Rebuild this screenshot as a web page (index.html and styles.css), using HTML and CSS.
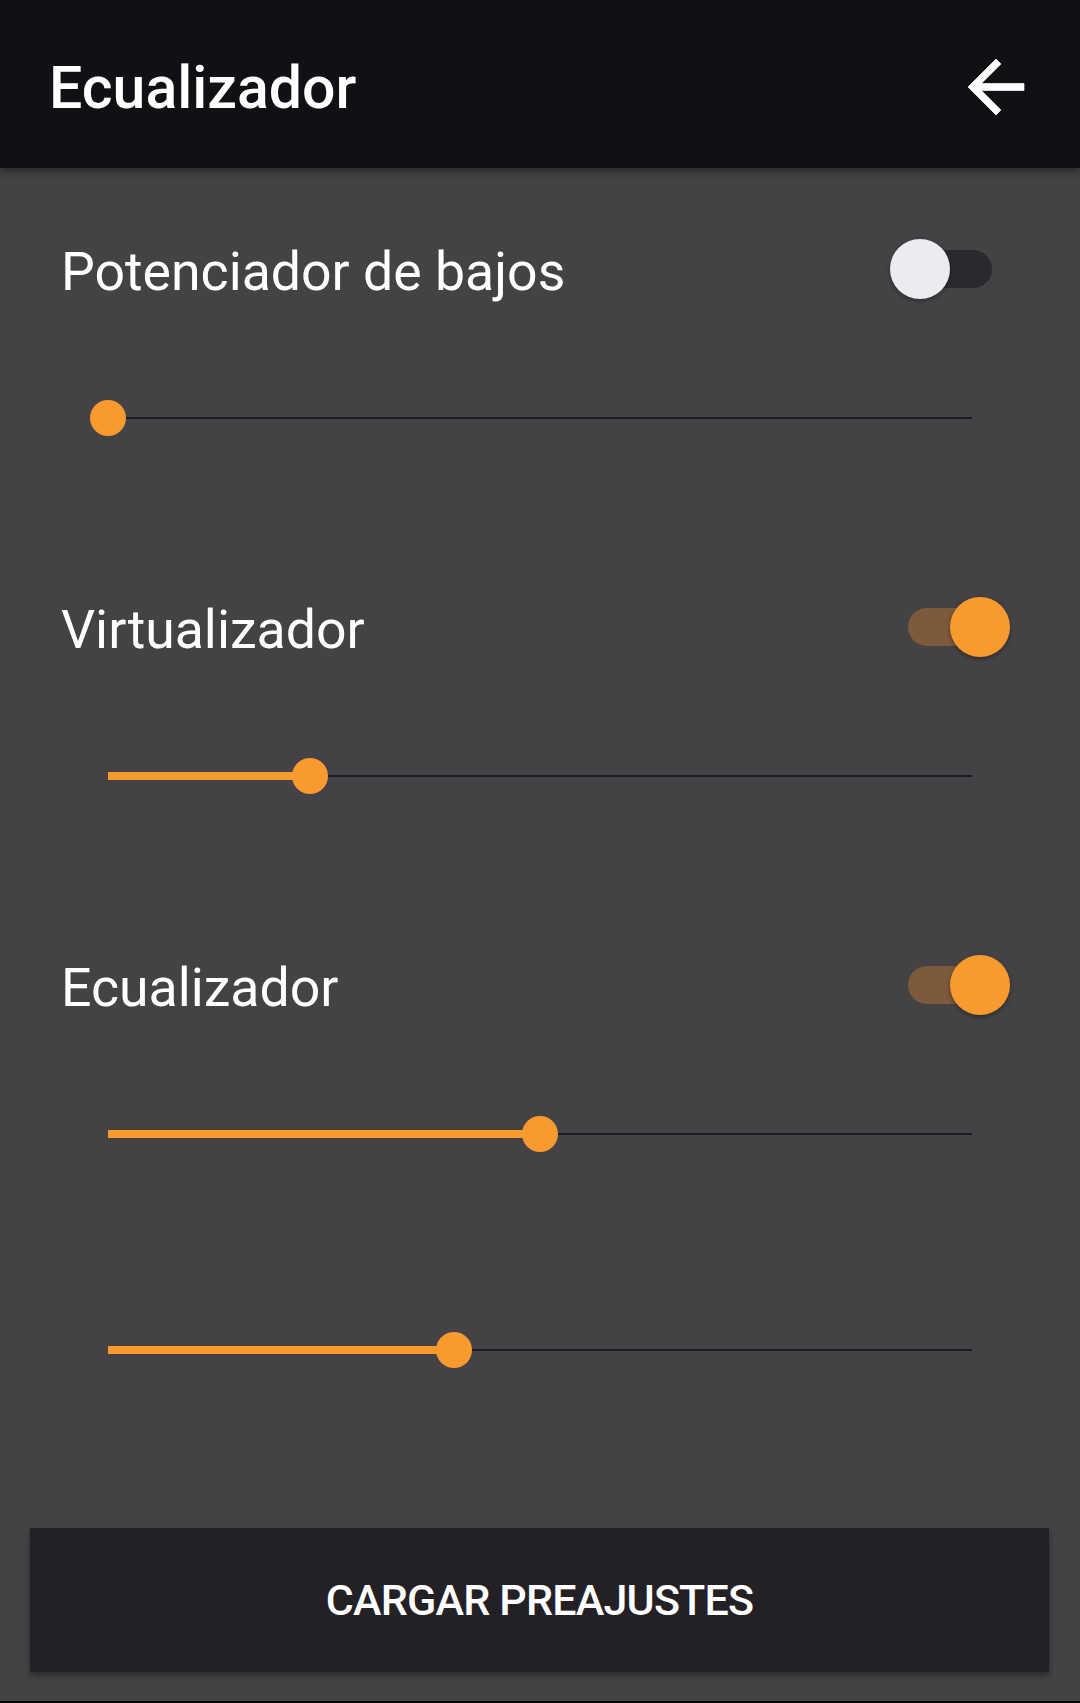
FILE: index.html
```html
<!DOCTYPE html>
<html lang="es">
<head>
<meta charset="utf-8">
<title>Ecualizador</title>
<link rel="stylesheet" href="styles.css">
</head>
<body>
<div class="app">
  <header class="topbar">
    <h1 class="title">Ecualizador</h1>
    <svg class="back" viewBox="0 0 24 24" aria-hidden="true"><path d="M20 11H7.83l5.59-5.59L12 4l-8 8 8 8 1.41-1.41L7.83 13H20v-2z"/></svg>
  </header>
  <main class="content">
    <section class="section first">
      <div class="row">
        <span class="label">Potenciador de bajos</span>
        <div class="switch"><div class="track"></div><div class="thumb"></div></div>
      </div>
      <div class="slider"><div class="line"></div><div class="fill" style="width:0%"></div><div class="knob" style="left:0%"></div></div>
    </section>
    <section class="section">
      <div class="row">
        <span class="label">Virtualizador</span>
        <div class="switch on"><div class="track"></div><div class="thumb"></div></div>
      </div>
      <div class="slider"><div class="line"></div><div class="fill" style="width:23.4%"></div><div class="knob" style="left:23.4%"></div></div>
    </section>
    <section class="section">
      <div class="row">
        <span class="label">Ecualizador</span>
        <div class="switch on"><div class="track"></div><div class="thumb"></div></div>
      </div>
      <div class="slider"><div class="line"></div><div class="fill" style="width:50%"></div><div class="knob" style="left:50%"></div></div>
      <div class="slider extra"><div class="line"></div><div class="fill" style="width:40%"></div><div class="knob" style="left:40%"></div></div>
    </section>
  </main>
  <div class="footer">
    <button class="preset">CARGAR PREAJUSTES</button>
  </div>
</div>
</body>
</html>
```
FILE: styles.css
```css
html, body {
  margin: 0;
  padding: 0;
  background: #000;
}
body {
  font-family: Roboto, "Noto Sans", sans-serif;
}
.app {
  width: 1080px;
  height: 1701px;
  display: flex;
  flex-direction: column;
  background: #444245;
  border-bottom: 2px solid #000;
}
.topbar {
  height: 168px;
  flex: none;
  background: #121014;
  display: flex;
  align-items: center;
  justify-content: space-between;
  padding: 0 42px 0 49px;
  box-shadow: 0 3px 8px rgba(0,0,0,0.45);
  position: relative;
  z-index: 1;
}
.title {
  margin: 0;
  color: #fff;
  font-size: 59px;
  font-weight: 500;
  line-height: 1;
  padding-top: 6px;
}
.back {
  width: 84px;
  height: 84px;
  fill: #fff;
  stroke: #fff;
  stroke-width: 0.2px;
  margin-top: 6px;
}
.content {
  flex: 1;
  display: flex;
  flex-direction: column;
}
.section {
  display: flex;
  flex-direction: column;
  margin-top: 129px;
}
.section.first {
  margin-top: 51px;
}
.row {
  height: 100px;
  display: flex;
  align-items: center;
  justify-content: space-between;
  padding: 0 70px 0 61px;
}
.label {
  color: #fff;
  font-size: 53.6px;
  line-height: 100px;
  padding-top: 6px;
}
.switch {
  position: relative;
  width: 120px;
  height: 60px;
}
.track {
  position: absolute;
  left: 18px;
  top: 11px;
  width: 84px;
  height: 38px;
  border-radius: 19px;
  background: #2b292d;
}
.thumb {
  position: absolute;
  left: 0;
  top: 0;
  width: 60px;
  height: 60px;
  border-radius: 50%;
  background: #edebef;
  box-shadow: 0 2px 4px rgba(0,0,0,0.35);
}
.switch.on .track {
  background: #7c5a3b;
}
.switch.on .thumb {
  left: 60px;
  background: #f99a2f;
}
.slider {
  position: relative;
  height: 60px;
  margin: 69px 108px 0 108px;
}
.slider.extra {
  margin-top: 156px;
}
.line {
  position: absolute;
  left: 0;
  right: 0;
  top: 29px;
  height: 2px;
  background: #1e1c20;
}
.fill {
  position: absolute;
  left: 0;
  top: 26px;
  height: 8px;
  background: #f99a2f;
}
.knob {
  position: absolute;
  top: 12px;
  width: 36px;
  height: 36px;
  margin-left: -18px;
  border-radius: 50%;
  background: #f99a2f;
}
.footer {
  flex: none;
  padding: 0 31px 29px 30px;
}
.preset {
  display: block;
  width: 100%;
  height: 144px;
  border: none;
  background: #232125;
  color: #fff;
  font-family: Roboto, "Noto Sans", sans-serif;
  font-size: 43px;
  font-weight: 500;
  letter-spacing: -0.8px;
  box-shadow: 0 4px 6px rgba(0,0,0,0.35);
  padding: 0;
}
```
